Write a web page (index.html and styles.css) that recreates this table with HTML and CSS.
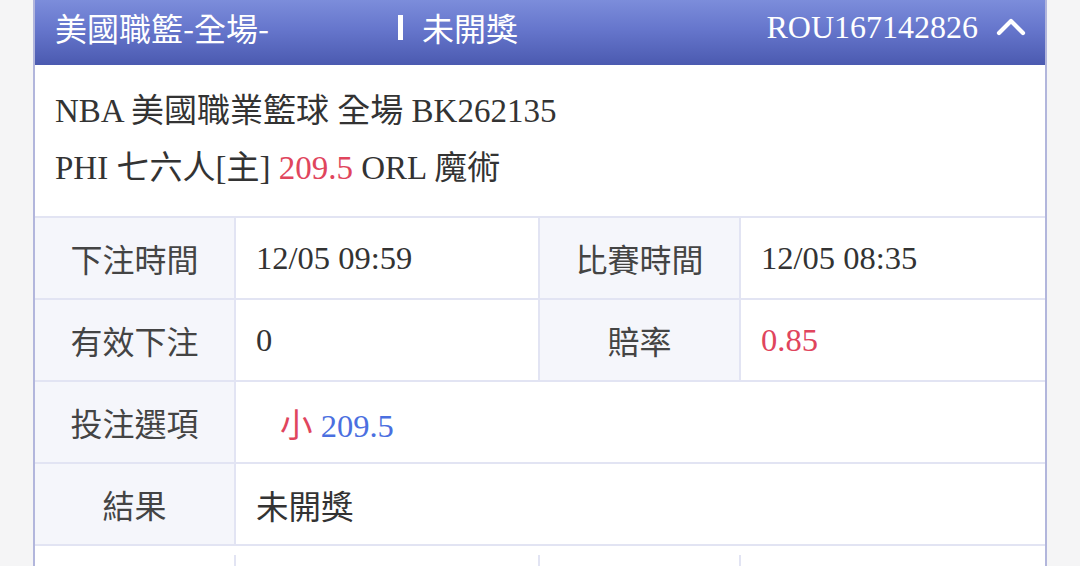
FILE: index.html
```html
<!DOCTYPE html>
<html lang="zh-Hant">
<head>
<meta charset="utf-8">
<link rel="stylesheet" href="styles.css">
</head>
<body>
<div class="card">
  <div class="head">
    <span class="league">美國職籃-全場-</span>
    <span class="status"><i class="bar"></i>未開獎</span>
    <span class="order">ROU167142826</span>
    <svg class="chev" width="30" height="20" viewBox="0 0 30 20"><path d="M3 17 L15 5 L27 17" fill="none" stroke="#fff" stroke-width="4.2" stroke-linecap="round" stroke-linejoin="round"/></svg>
  </div>
  <div class="info">
    <div class="line">NBA 美國職業籃球 全場 BK262135</div>
    <div class="line">PHI 七六人[主] <span class="red">209.5</span> ORL 魔術</div>
  </div>
  <div class="grid">
    <div class="lab">下注時間</div>
    <div class="val">12/05 09:59</div>
    <div class="lab">比賽時間</div>
    <div class="val">12/05 08:35</div>

    <div class="lab">有效下注</div>
    <div class="val">0</div>
    <div class="lab">賠率</div>
    <div class="val red">0.85</div>

    <div class="lab">投注選項</div>
    <div class="val wide"><span class="pick"><span class="red">小</span> <span class="blue">209.5</span></span></div>

    <div class="lab">結果</div>
    <div class="val wide">未開獎</div>
  </div>
  <div class="grid next">
    <div class="lab"></div>
    <div class="val"></div>
    <div class="lab"></div>
    <div class="val"></div>
  </div>
</div>
</body>
</html>
```

FILE: styles.css
```css
html, body {
  margin: 0;
  padding: 0;
  background: #f5f5f6;
  height: 100%;
  overflow: hidden;
}
body {
  font-family: "Liberation Serif", "Noto Sans CJK TC", serif;
  color: #333;
}
.card {
  margin: 0 33px;
  background: #fff;
  border-left: 2px solid #b2b6dc;
  border-right: 2px solid #b2b6dc;
  min-height: 100%;
}
.head {
  height: 65px;
  box-sizing: border-box;
  background: linear-gradient(180deg, #7c8ddb 0%, #6676cc 45%, #4b5ab0 100%);
  color: #fff;
  display: flex;
  align-items: center;
  padding: 0 19px 12px 20px;
  font-size: 32px;
  line-height: 42px;
}
.league, .status {
  font-family: "Noto Sans CJK TC", sans-serif;
  font-size: 32px;
}
.league {
  width: 343px;
}
.status {
  display: flex;
  align-items: center;
}
.bar {
  display: inline-block;
  width: 5px;
  height: 25px;
  background: #fff;
  margin-right: 19px;
  margin-top: 2px;
}
.order {
  margin-left: auto;
  font-family: "Liberation Serif", serif;
  font-size: 32px;
}
.chev {
  margin-left: 18px;
  margin-top: -2px;
}
.info {
  padding: 18px 20px 19px;
  border-bottom: 2px solid #e2e4f3;
  font-size: 33px;
  color: #333;
}
.line {
  height: 57px;
  line-height: 57px;
  white-space: nowrap;
}
.red { color: #e0455d; }
.blue { color: #4b6fe0; }
.grid {
  display: grid;
  grid-template-columns: 201px 304px 201px 1fr;
}
.lab, .val {
  height: 82px;
  box-sizing: border-box;
  border-bottom: 2px solid #e2e4f3;
  display: flex;
  align-items: center;
  font-size: 32.5px;
}
.lab {
  background: #f5f6fb;
  justify-content: center;
  font-family: "Noto Sans CJK TC", sans-serif;
  font-size: 32px;
  color: #444;
  border-right: 2px solid #e2e4f3;
}
.val {
  padding-left: 20px;
  color: #333;
}
.val.red {
  color: #e0455d;
}
.grid > .val:nth-child(4n+2) {
  border-right: 2px solid #e2e4f3;
}
.val.wide {
  grid-column: span 3;
  border-right: 0 !important;
}
.pick {
  padding-left: 24px;
}
.next {
  margin-top: 9px;
}
.next .lab, .next .val {
  border-bottom: 0;
  background: #fff;
}
```
